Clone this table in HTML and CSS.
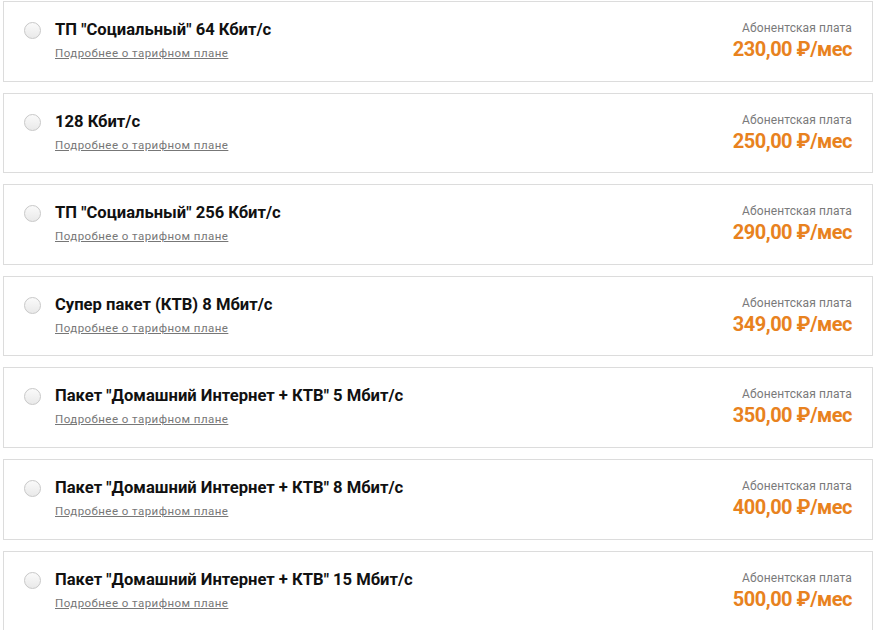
FILE: index.html
```html
<!DOCTYPE html>
<html lang="ru">
<head>
<meta charset="utf-8">
<link rel="stylesheet" href="styles.css">
</head>
<body>
<div class="list">
  <label class="tariff">
    <span class="radio"></span>
    <span class="info">
      <span class="name">ТП "Социальный" 64 Кбит/с</span>
      <a class="more" href="#">Подробнее о тарифном плане</a>
    </span>
    <span class="fee">
      <span class="fee-label">Абонентская плата</span>
      <span class="price">230,00 ₽/мес</span>
    </span>
  </label>
  <label class="tariff">
    <span class="radio"></span>
    <span class="info">
      <span class="name">128 Кбит/с</span>
      <a class="more" href="#">Подробнее о тарифном плане</a>
    </span>
    <span class="fee">
      <span class="fee-label">Абонентская плата</span>
      <span class="price">250,00 ₽/мес</span>
    </span>
  </label>
  <label class="tariff">
    <span class="radio"></span>
    <span class="info">
      <span class="name">ТП "Социальный" 256 Кбит/с</span>
      <a class="more" href="#">Подробнее о тарифном плане</a>
    </span>
    <span class="fee">
      <span class="fee-label">Абонентская плата</span>
      <span class="price">290,00 ₽/мес</span>
    </span>
  </label>
  <label class="tariff">
    <span class="radio"></span>
    <span class="info">
      <span class="name">Супер пакет (КТВ) 8 Мбит/с</span>
      <a class="more" href="#">Подробнее о тарифном плане</a>
    </span>
    <span class="fee">
      <span class="fee-label">Абонентская плата</span>
      <span class="price">349,00 ₽/мес</span>
    </span>
  </label>
  <label class="tariff">
    <span class="radio"></span>
    <span class="info">
      <span class="name">Пакет "Домашний Интернет + КТВ" 5 Мбит/с</span>
      <a class="more" href="#">Подробнее о тарифном плане</a>
    </span>
    <span class="fee">
      <span class="fee-label">Абонентская плата</span>
      <span class="price">350,00 ₽/мес</span>
    </span>
  </label>
  <label class="tariff">
    <span class="radio"></span>
    <span class="info">
      <span class="name">Пакет "Домашний Интернет + КТВ" 8 Мбит/с</span>
      <a class="more" href="#">Подробнее о тарифном плане</a>
    </span>
    <span class="fee">
      <span class="fee-label">Абонентская плата</span>
      <span class="price">400,00 ₽/мес</span>
    </span>
  </label>
  <label class="tariff">
    <span class="radio"></span>
    <span class="info">
      <span class="name">Пакет "Домашний Интернет + КТВ" 15 Мбит/с</span>
      <a class="more" href="#">Подробнее о тарифном плане</a>
    </span>
    <span class="fee">
      <span class="fee-label">Абонентская плата</span>
      <span class="price">500,00 ₽/мес</span>
    </span>
  </label>
</div>
</body>
</html>
```
FILE: styles.css
```css
html, body {
  margin: 0;
  padding: 0;
  background: #fff;
  overflow: hidden;
}
body {
  font-family: Roboto, "Noto Sans", sans-serif;
  color: #111;
}
.list {
  display: flex;
  flex-direction: column;
  gap: 11px;
  padding: 1px 0 0 3px;
  width: 890px;
}
.tariff {
  display: flex;
  align-items: flex-start;
  box-sizing: border-box;
  height: 80.6px;
  border: 1px solid #dcdcdc;
  padding: 0 20px 0 20px;
  width: 870px;
}
.radio {
  flex: none;
  width: 15px;
  height: 15px;
  border: 1px solid #c8c8c8;
  border-radius: 50%;
  background: linear-gradient(#fafafa, #e9e9e9);
  margin-top: 20px;
}
.info {
  display: flex;
  flex-direction: column;
  margin-left: 14px;
  margin-top: 18px;
  flex: 1;
}
.name {
  font-size: 16.6px;
  font-weight: 700;
  line-height: 20px;
  color: #111;
}
.more {
  font-size: 11.5px;
  line-height: 14px;
  color: #777;
  text-decoration: underline;
  margin-top: 6px;
  letter-spacing: 0.45px;
}
.fee {
  display: flex;
  flex-direction: column;
  align-items: flex-end;
  margin-top: 19px;
}
.fee-label {
  font-size: 12px;
  line-height: 14px;
  color: #7a7a7a;
  letter-spacing: 0.1px;
}
.price {
  font-size: 20px;
  font-weight: 700;
  line-height: 24px;
  color: #e8821e;
  letter-spacing: -0.5px;
  margin-top: 2px;
}
```
